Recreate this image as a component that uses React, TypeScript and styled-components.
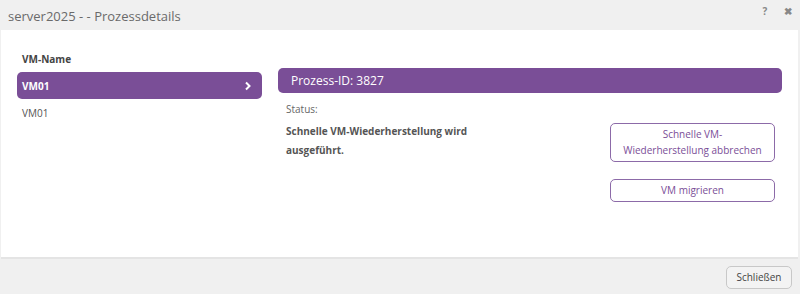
import React from "react";
import styled, { createGlobalStyle } from "styled-components";

const GlobalStyle = createGlobalStyle`
  html, body {
    margin: 0;
    padding: 0;
    background: #f0f0f0;
    font-family: "Open Sans", "Noto Sans", sans-serif;
  }
`;

const Dialog = styled.div`
  width: 800px;
  height: 294px;
  display: flex;
  flex-direction: column;
  background: #f0f0f0;
  box-sizing: border-box;
`;

const Header = styled.div`
  height: 30px;
  display: flex;
  align-items: center;
  padding: 0 2px 0 8px;
  background: #f0f0f0;
`;

const Title = styled.div`
  flex: 1;
  font-size: 13px;
  color: #6a6a6a;
  padding-top: 1px;
`;

const HeaderIcon = styled.span`
  font-size: 10px;
  font-weight: 700;
  color: #888;
  width: 20px;
  text-align: center;
  margin-left: 3px;
  margin-top: -8px;
`;

const Body = styled.div`
  height: 229px;
  margin: 0 2px 0 1px;
  background: #fff;
  display: flex;
  padding: 21px 16px 0 16px;
  gap: 16px;
  box-sizing: border-box;
  border-bottom: 2px solid #e4e4e4;
`;

const LeftPane = styled.div`
  width: 245px;
  display: flex;
  flex-direction: column;
`;

const ColumnTitle = styled.div`
  font-size: 10px;
  font-weight: 700;
  color: #444;
  padding-left: 5px;
  height: 21px;
  line-height: 16px;
`;

const VmRow = styled.div<{ $selected?: boolean }>`
  height: 27px;
  display: flex;
  align-items: center;
  justify-content: space-between;
  padding: 0 10px 0 5px;
  border-radius: 5px;
  font-size: 10px;
  font-weight: ${(p) => (p.$selected ? 700 : 400)};
  color: ${(p) => (p.$selected ? "#fff" : "#555")};
  background: ${(p) => (p.$selected ? "#7a4e97" : "transparent")};
`;

const RightPane = styled.div`
  flex: 1;
  display: flex;
  flex-direction: column;
  padding-top: 17px;
`;

const ProcessBar = styled.div`
  height: 25px;
  background: #7a4e97;
  border-radius: 5px;
  color: #fff;
  font-size: 12px;
  display: flex;
  align-items: center;
  padding-left: 13px;
`;

const Content = styled.div`
  display: flex;
  padding: 0 7px 0 8px;
  margin-top: 8px;
`;

const StatusColumn = styled.div`
  flex: 1;
  display: flex;
  flex-direction: column;
`;

const StatusLabel = styled.div`
  font-size: 10px;
  color: #666;
  line-height: 16px;
`;

const StatusText = styled.div`
  margin-top: 5px;
  font-size: 10px;
  font-weight: 700;
  color: #555;
  line-height: 19px;
  width: 200px;
`;

const Actions = styled.div`
  width: 165px;
  display: flex;
  flex-direction: column;
  gap: 17px;
  margin-top: 22px;
`;

const ActionButton = styled.button`
  width: 100%;
  min-height: 23px;
  padding: 2px 6px 3px;
  background: #fff;
  border: 1px solid #8c6aa8;
  border-radius: 5px;
  color: #7a4e97;
  font-family: inherit;
  font-size: 10px;
  line-height: 16px;
  text-align: center;
  box-sizing: border-box;
`;

const Footer = styled.div`
  flex: 1;
  display: flex;
  align-items: center;
  justify-content: flex-end;
  padding: 0 8px 0 0;
`;

const CloseButton = styled.button`
  height: 23px;
  padding: 0 9.5px;
  background: #f3f3f3;
  border: 1px solid #c8c8c8;
  border-radius: 5px;
  color: #444;
  font-family: inherit;
  font-size: 10px;
  margin-top: 1px;
`;

const Chevron = () => (
  <svg width="8" height="10" viewBox="0 0 8 10">
    <path d="M2 1.5 L5.5 5 L2 8.5" stroke="#fff" strokeWidth="2" fill="none" />
  </svg>
);

export default function App() {
  return (
    <Dialog>
      <GlobalStyle />
      <Header>
        <Title>server2025 - - Prozessdetails</Title>
        <HeaderIcon>?</HeaderIcon>
        <HeaderIcon>✖</HeaderIcon>
      </Header>
      <Body>
        <LeftPane>
          <ColumnTitle>VM-Name</ColumnTitle>
          <VmRow $selected>
            VM01
            <Chevron />
          </VmRow>
          <VmRow>VM01</VmRow>
        </LeftPane>
        <RightPane>
          <ProcessBar>Prozess-ID: 3827</ProcessBar>
          <Content>
            <StatusColumn>
              <StatusLabel>Status:</StatusLabel>
              <StatusText>Schnelle VM-Wiederherstellung wird ausgeführt.</StatusText>
            </StatusColumn>
            <Actions>
              <ActionButton>
                Schnelle VM-
                <br />
                Wiederherstellung abbrechen
              </ActionButton>
              <ActionButton>VM migrieren</ActionButton>
            </Actions>
          </Content>
        </RightPane>
      </Body>
      <Footer>
        <CloseButton>Schließen</CloseButton>
      </Footer>
    </Dialog>
  );
}
